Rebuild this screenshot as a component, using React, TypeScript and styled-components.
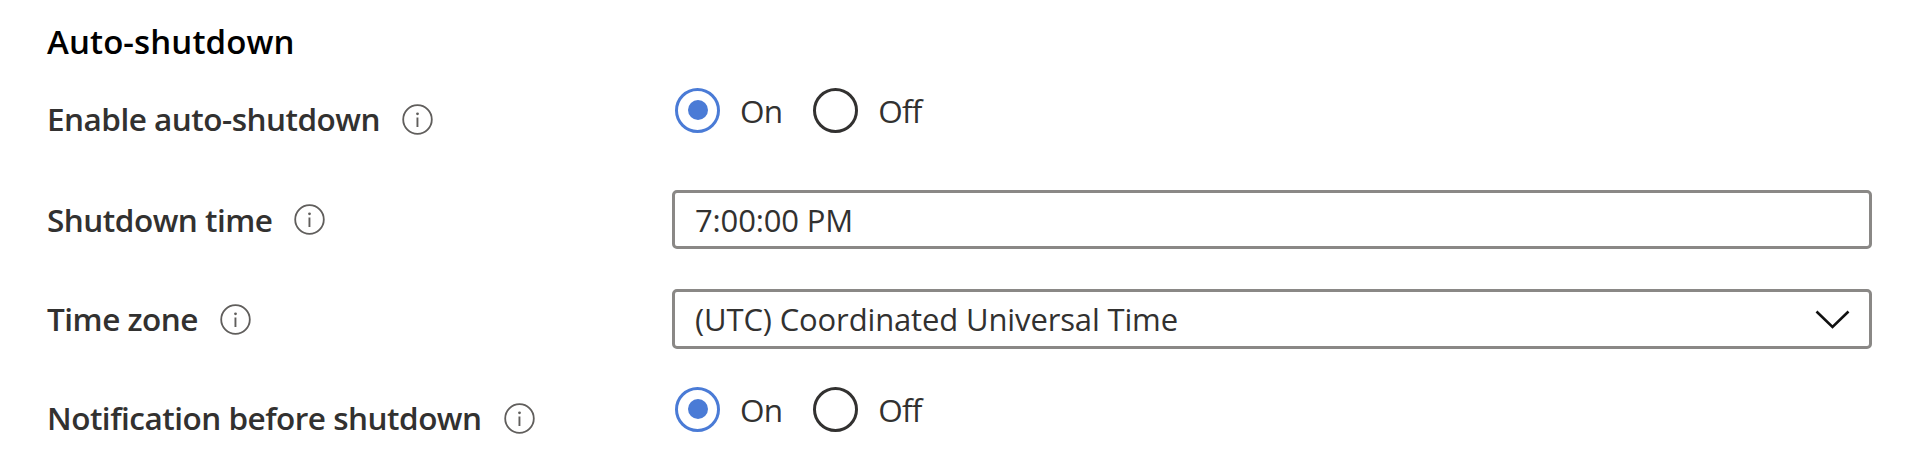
import React from "react";
import styled, { createGlobalStyle } from "styled-components";

const Global = createGlobalStyle`
  html, body { margin: 0; padding: 0; background: #fff; }
  body { font-family: "Open Sans", "Noto Sans", "Liberation Sans", sans-serif; }
`;

const Page = styled.div`
  width: 1922px;
  height: 460px;
  box-sizing: border-box;
  padding: 20px 50px 0 47px;
  overflow: hidden;
`;

const Heading = styled.h2`
  margin: 0 0 24px;
  height: 44px;
  font-size: 33px;
  line-height: 44px;
  font-weight: 600;
  color: #000;
  letter-spacing: 0.1px;
`;

const Row = styled.div<{ $after: number }>`
  display: grid;
  grid-template-columns: 625px 1fr;
  align-items: center;
  margin-bottom: ${(p) => p.$after}px;
`;

const Label = styled.label`
  display: flex;
  align-items: center;
  gap: 22px;
  font-size: 31.5px;
  line-height: 44px;
  font-weight: 600;
  color: #323130;
  letter-spacing: -0.5px;
`;

const RadioGroup = styled.div`
  display: flex;
  align-items: center;
  height: 62px;
  padding: 0 0 18px 3px;
  box-sizing: border-box;
`;

const RadioOption = styled.span`
  display: flex;
  align-items: center;
  margin-right: 31px;
`;

const RadioCircle = styled.span<{ $checked?: boolean }>`
  display: flex;
  align-items: center;
  justify-content: center;
  width: 45px;
  height: 45px;
  box-sizing: border-box;
  border-radius: 50%;
  border: 3px solid ${(p) => (p.$checked ? "#4a7bd6" : "#323130")};
  margin-right: 20px;
`;

const RadioDot = styled.span`
  width: 20px;
  height: 20px;
  border-radius: 50%;
  background: #4a7bd6;
`;

const RadioText = styled.span`
  font-size: 31.5px;
  line-height: 44px;
  color: #323130;
  letter-spacing: -0.8px;
  transform: translateY(1px);
`;

const Field = styled.div<{ $height: number }>`
  display: flex;
  align-items: center;
  justify-content: space-between;
  height: ${(p) => p.$height}px;
  box-sizing: border-box;
  border: 3px solid #8a8886;
  border-radius: 5px;
  padding: 0 19px 0 20px;
  font-size: 31px;
  color: #323130;
  letter-spacing: -0.14px;
`;

const InfoSvg = styled.svg`
  width: 31px;
  height: 31px;
  flex: none;
`;

const Chevron = styled.svg`
  width: 35px;
  height: 19px;
  flex: none;
`;

const Info = () => (
  <InfoSvg viewBox="0 0 31 31" fill="none">
    <circle cx="15.5" cy="15.5" r="14.3" stroke="#605e5c" strokeWidth="1.8" />
    <rect x="14.5" y="13.5" width="1.9" height="9.5" fill="#605e5c" />
    <circle cx="15.5" cy="9.8" r="1.4" fill="#605e5c" />
  </InfoSvg>
);

const Radios = () => (
  <RadioGroup>
    <RadioOption>
      <RadioCircle $checked>
        <RadioDot />
      </RadioCircle>
      <RadioText>On</RadioText>
    </RadioOption>
    <RadioOption>
      <RadioCircle />
      <RadioText>Off</RadioText>
    </RadioOption>
  </RadioGroup>
);

export default function App() {
  return (
    <Page>
      <Global />
      <Heading>Auto-shutdown</Heading>
      <Row $after={40}>
        <Label>Enable auto-shutdown <Info /></Label>
        <Radios />
      </Row>
      <Row $after={40}>
        <Label>Shutdown time <Info /></Label>
        <Field $height={59}>7:00:00 PM</Field>
      </Row>
      <Row $after={38}>
        <Label>Time zone <Info /></Label>
        <Field $height={60}>
          (UTC) Coordinated Universal Time
          <Chevron viewBox="0 0 35 19" fill="none">
            <path d="M1.5 1.5 L17.5 17 L33.5 1.5" stroke="#111" strokeWidth="2.6" />
          </Chevron>
        </Field>
      </Row>
      <Row $after={0}>
        <Label>Notification before shutdown <Info /></Label>
        <Radios />
      </Row>
    </Page>
  );
}
